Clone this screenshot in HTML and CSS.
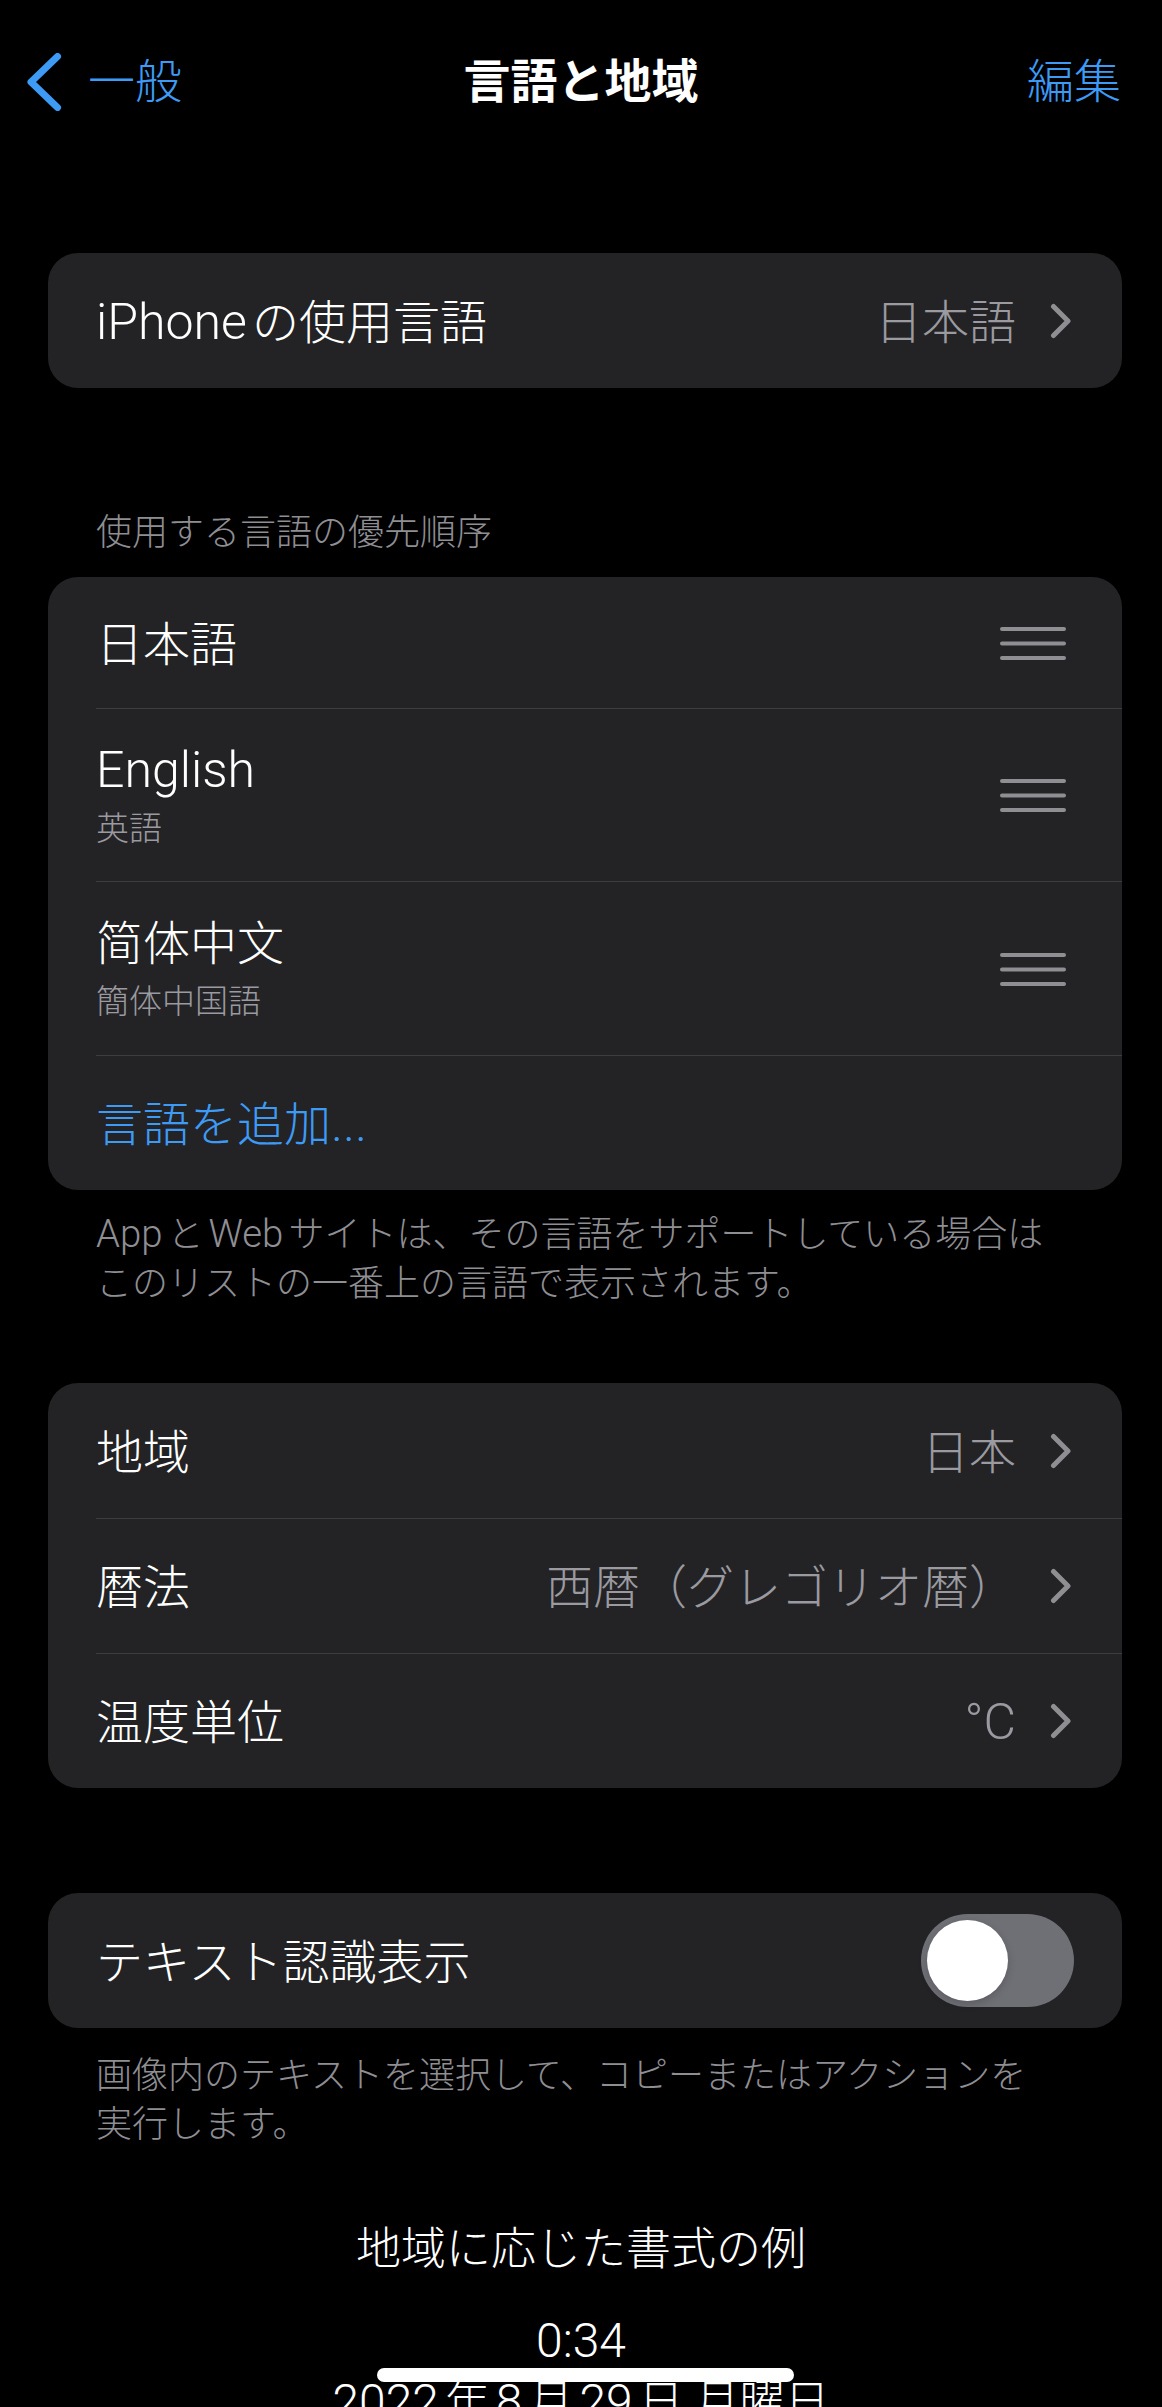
FILE: index.html
```html
<!DOCTYPE html>
<html lang="ja">
<head>
<meta charset="utf-8">
<title>言語と地域</title>
<link rel="stylesheet" href="styles.css">
</head>
<body>
<div class="screen">
  <header class="nav">
    <a class="back">
      <svg class="back-icon" viewBox="0 0 35 58"><path d="M30.5 3.5 L4 29 L30.5 54.5" fill="none" stroke="currentColor" stroke-width="7" stroke-linecap="round" stroke-linejoin="round"/></svg>
      <span>一般</span>
    </a>
    <h1 class="title">言語と地域</h1>
    <a class="edit">編集</a>
  </header>

  <section class="group g-device">
    <div class="card">
      <div class="row">
        <div class="row-body">
          <span class="label"><span class="lat sp">iPhone</span>の使用言語</span>
          <span class="value">日本語</span>
          <svg class="chev" viewBox="0 0 22 36"><path d="M3.5 3.5 L18 18 L3.5 32.5" fill="none" stroke="currentColor" stroke-width="5" stroke-linecap="round" stroke-linejoin="round"/></svg>
        </div>
      </div>
    </div>
  </section>

  <section class="group g-langs">
    <h2 class="group-header">使用する言語の優先順序</h2>
    <div class="card">
      <div class="row row-h131">
        <div class="row-body">
          <span class="label">日本語</span>
          <svg class="handle" viewBox="0 0 66 34"><g stroke="currentColor" stroke-width="4" stroke-linecap="round"><line x1="2" y1="2" x2="64" y2="2"/><line x1="2" y1="16.5" x2="64" y2="16.5"/><line x1="2" y1="31" x2="64" y2="31"/></g></svg>
        </div>
      </div>
      <div class="row row-h173">
        <div class="row-body">
          <div class="label lang">
            <div class="lang-name"><span class="lat">English</span></div>
            <div class="lang-sub">英語</div>
          </div>
          <svg class="handle" viewBox="0 0 66 34"><g stroke="currentColor" stroke-width="4" stroke-linecap="round"><line x1="2" y1="2" x2="64" y2="2"/><line x1="2" y1="16.5" x2="64" y2="16.5"/><line x1="2" y1="31" x2="64" y2="31"/></g></svg>
        </div>
      </div>
      <div class="row row-h174">
        <div class="row-body">
          <div class="label lang">
            <div class="lang-name zh" lang="zh-Hans">简体中文</div>
            <div class="lang-sub">簡体中国語</div>
          </div>
          <svg class="handle" viewBox="0 0 66 34"><g stroke="currentColor" stroke-width="4" stroke-linecap="round"><line x1="2" y1="2" x2="64" y2="2"/><line x1="2" y1="16.5" x2="64" y2="16.5"/><line x1="2" y1="31" x2="64" y2="31"/></g></svg>
        </div>
      </div>
      <div class="row">
        <div class="row-body">
          <span class="label add">言語を追加<span class="lat">...</span></span>
        </div>
      </div>
    </div>
    <p class="group-footer"><span class="lat sp">App</span>と<span class="lat sp2">Web</span>サイトは、その言語をサポートしている場合は<br>このリストの一番上の言語で表示されます。</p>
  </section>

  <section class="group g-region">
    <div class="card">
      <div class="row">
        <div class="row-body">
          <span class="label">地域</span>
          <span class="value">日本</span>
          <svg class="chev" viewBox="0 0 22 36"><path d="M3.5 3.5 L18 18 L3.5 32.5" fill="none" stroke="currentColor" stroke-width="5" stroke-linecap="round" stroke-linejoin="round"/></svg>
        </div>
      </div>
      <div class="row">
        <div class="row-body">
          <span class="label">暦法</span>
          <span class="value">西暦（グレゴリオ暦）</span>
          <svg class="chev" viewBox="0 0 22 36"><path d="M3.5 3.5 L18 18 L3.5 32.5" fill="none" stroke="currentColor" stroke-width="5" stroke-linecap="round" stroke-linejoin="round"/></svg>
        </div>
      </div>
      <div class="row">
        <div class="row-body">
          <span class="label">温度単位</span>
          <span class="value"><span class="lat">°C</span></span>
          <svg class="chev" viewBox="0 0 22 36"><path d="M3.5 3.5 L18 18 L3.5 32.5" fill="none" stroke="currentColor" stroke-width="5" stroke-linecap="round" stroke-linejoin="round"/></svg>
        </div>
      </div>
    </div>
  </section>

  <section class="group g-text">
    <div class="card">
      <div class="row">
        <div class="row-body">
          <span class="label">テキスト認識表示</span>
          <span class="switch"><span class="knob"></span></span>
        </div>
      </div>
    </div>
    <p class="group-footer footer-2">画像内のテキストを選択して、コピーまたはアクションを<br>実行します。</p>
  </section>

  <section class="example">
    <div class="example-title">地域に応じた書式の例</div>
    <div class="example-time">0:34</div>
    <div class="example-date"><span class="lat dsp-r">2022</span>年<span class="lat dsp">8</span>月<span class="lat dsp">29</span>日 月曜日</div>
  </section>

  <div class="home-indicator"></div>
</div>
</body>
</html>
```

FILE: styles.css
```css
html, body {
  margin: 0;
  padding: 0;
  background: #000;
}

body {
  width: 1162px;
  height: 2407px;
  overflow: hidden;
  font-family: Roboto, "Noto Sans CJK JP", sans-serif;
  font-size: 47px;
  font-weight: 300;
  color: #fff;
}

.screen {
  position: relative;
  width: 1162px;
  height: 2407px;
}

.lat {
  font-size: 1.065em;
  font-weight: 300;
  line-height: 1;
}

.sp { margin-right: 5px; }
.sp2 { margin: 0 5px; }
.dsp { margin: 0 6px; }
.dsp-r { margin-right: 6px; }

/* Navigation bar */
.nav {
  height: 164px;
  display: grid;
  grid-template-columns: 1fr auto 1fr;
  align-items: center;
}

.back {
  display: flex;
  align-items: center;
  gap: 26px;
  padding-left: 27px;
  color: #3d9bf6;
  line-height: 60px;
}

.back-icon {
  display: block;
  width: 35px;
  height: 58px;
}

.title {
  margin: 0;
  font-size: 47px;
  font-weight: 700;
  line-height: 60px;
}

.edit {
  justify-self: end;
  padding-right: 41px;
  color: #3d9bf6;
  line-height: 60px;
}

/* Groups and cards */
.group {
  margin: 0 40px 0 48px;
}

.g-device { margin-top: 89px; }
.g-region { margin-top: 74px; }
.g-text { margin-top: 105px; }

.group-header {
  margin: 121px 0 20px;
  padding-left: 48px;
  font-size: 36px;
  font-weight: 300;
  line-height: 48px;
  color: #8e8e93;
}

.group-footer {
  margin: 21px 0 0;
  padding-left: 48px;
  font-size: 36px;
  line-height: 49px;
  color: #8e8e93;
}

.footer-2 { margin-top: 24px; }

.card {
  background: #232325;
  border-radius: 30px;
  overflow: hidden;
}

.row {
  display: flex;
  height: 135px;
  padding-left: 48px;
}

.row-h131 { height: 131px; }
.row-h173 { height: 173px; }
.row-h174 { height: 174px; }

.row-body {
  flex: 1;
  display: flex;
  align-items: center;
  box-sizing: border-box;
  padding: 4px 50px 0 0;
  min-width: 0;
}

.row + .row .row-body {
  border-top: 1px solid #3d3d40;
}

.label {
  flex: 1;
  line-height: 60px;
  white-space: nowrap;
}

.value {
  margin-right: 34px;
  color: #9a9aa0;
  line-height: 60px;
  white-space: nowrap;
}

.chev {
  display: block;
  width: 22px;
  height: 36px;
  margin-top: -4px;
  color: #8e8e93;
}

.handle {
  display: block;
  width: 66px;
  height: 34px;
  margin: -2px 6px 0 0;
  color: #8e8e93;
}

.lang {
  display: flex;
  flex-direction: column;
}

.lang-name {
  line-height: 63px;
}

.zh {
  font-family: Roboto, "Noto Sans CJK SC", sans-serif;
}

.lang-sub {
  font-size: 33px;
  line-height: 54px;
  color: #9a9aa0;
}

.add {
  color: #3d9bf6;
}

/* Switch */
.switch {
  display: flex;
  align-items: center;
  box-sizing: border-box;
  width: 153px;
  height: 93px;
  padding: 0 6px;
  margin: -4px -2px 0 0;
  border-radius: 47px;
  background: #6f6f76;
}

.knob {
  width: 81px;
  height: 81px;
  border-radius: 50%;
  background: #fff;
  box-shadow: 0 3px 8px rgba(0, 0, 0, 0.18);
}

/* Example */
.example {
  margin-top: 70px;
  text-align: center;
}

.example-title {
  font-size: 45px;
  line-height: 60px;
}

.example-time {
  margin-top: 31px;
  font-size: 48px;
  line-height: 60px;
}

.example-date {
  margin-top: 2px;
  font-size: 45px;
  line-height: 60px;
}

.home-indicator {
  position: absolute;
  left: 377px;
  top: 2368px;
  width: 417px;
  height: 14px;
  border-radius: 7px;
  background: #fff;
}
```
